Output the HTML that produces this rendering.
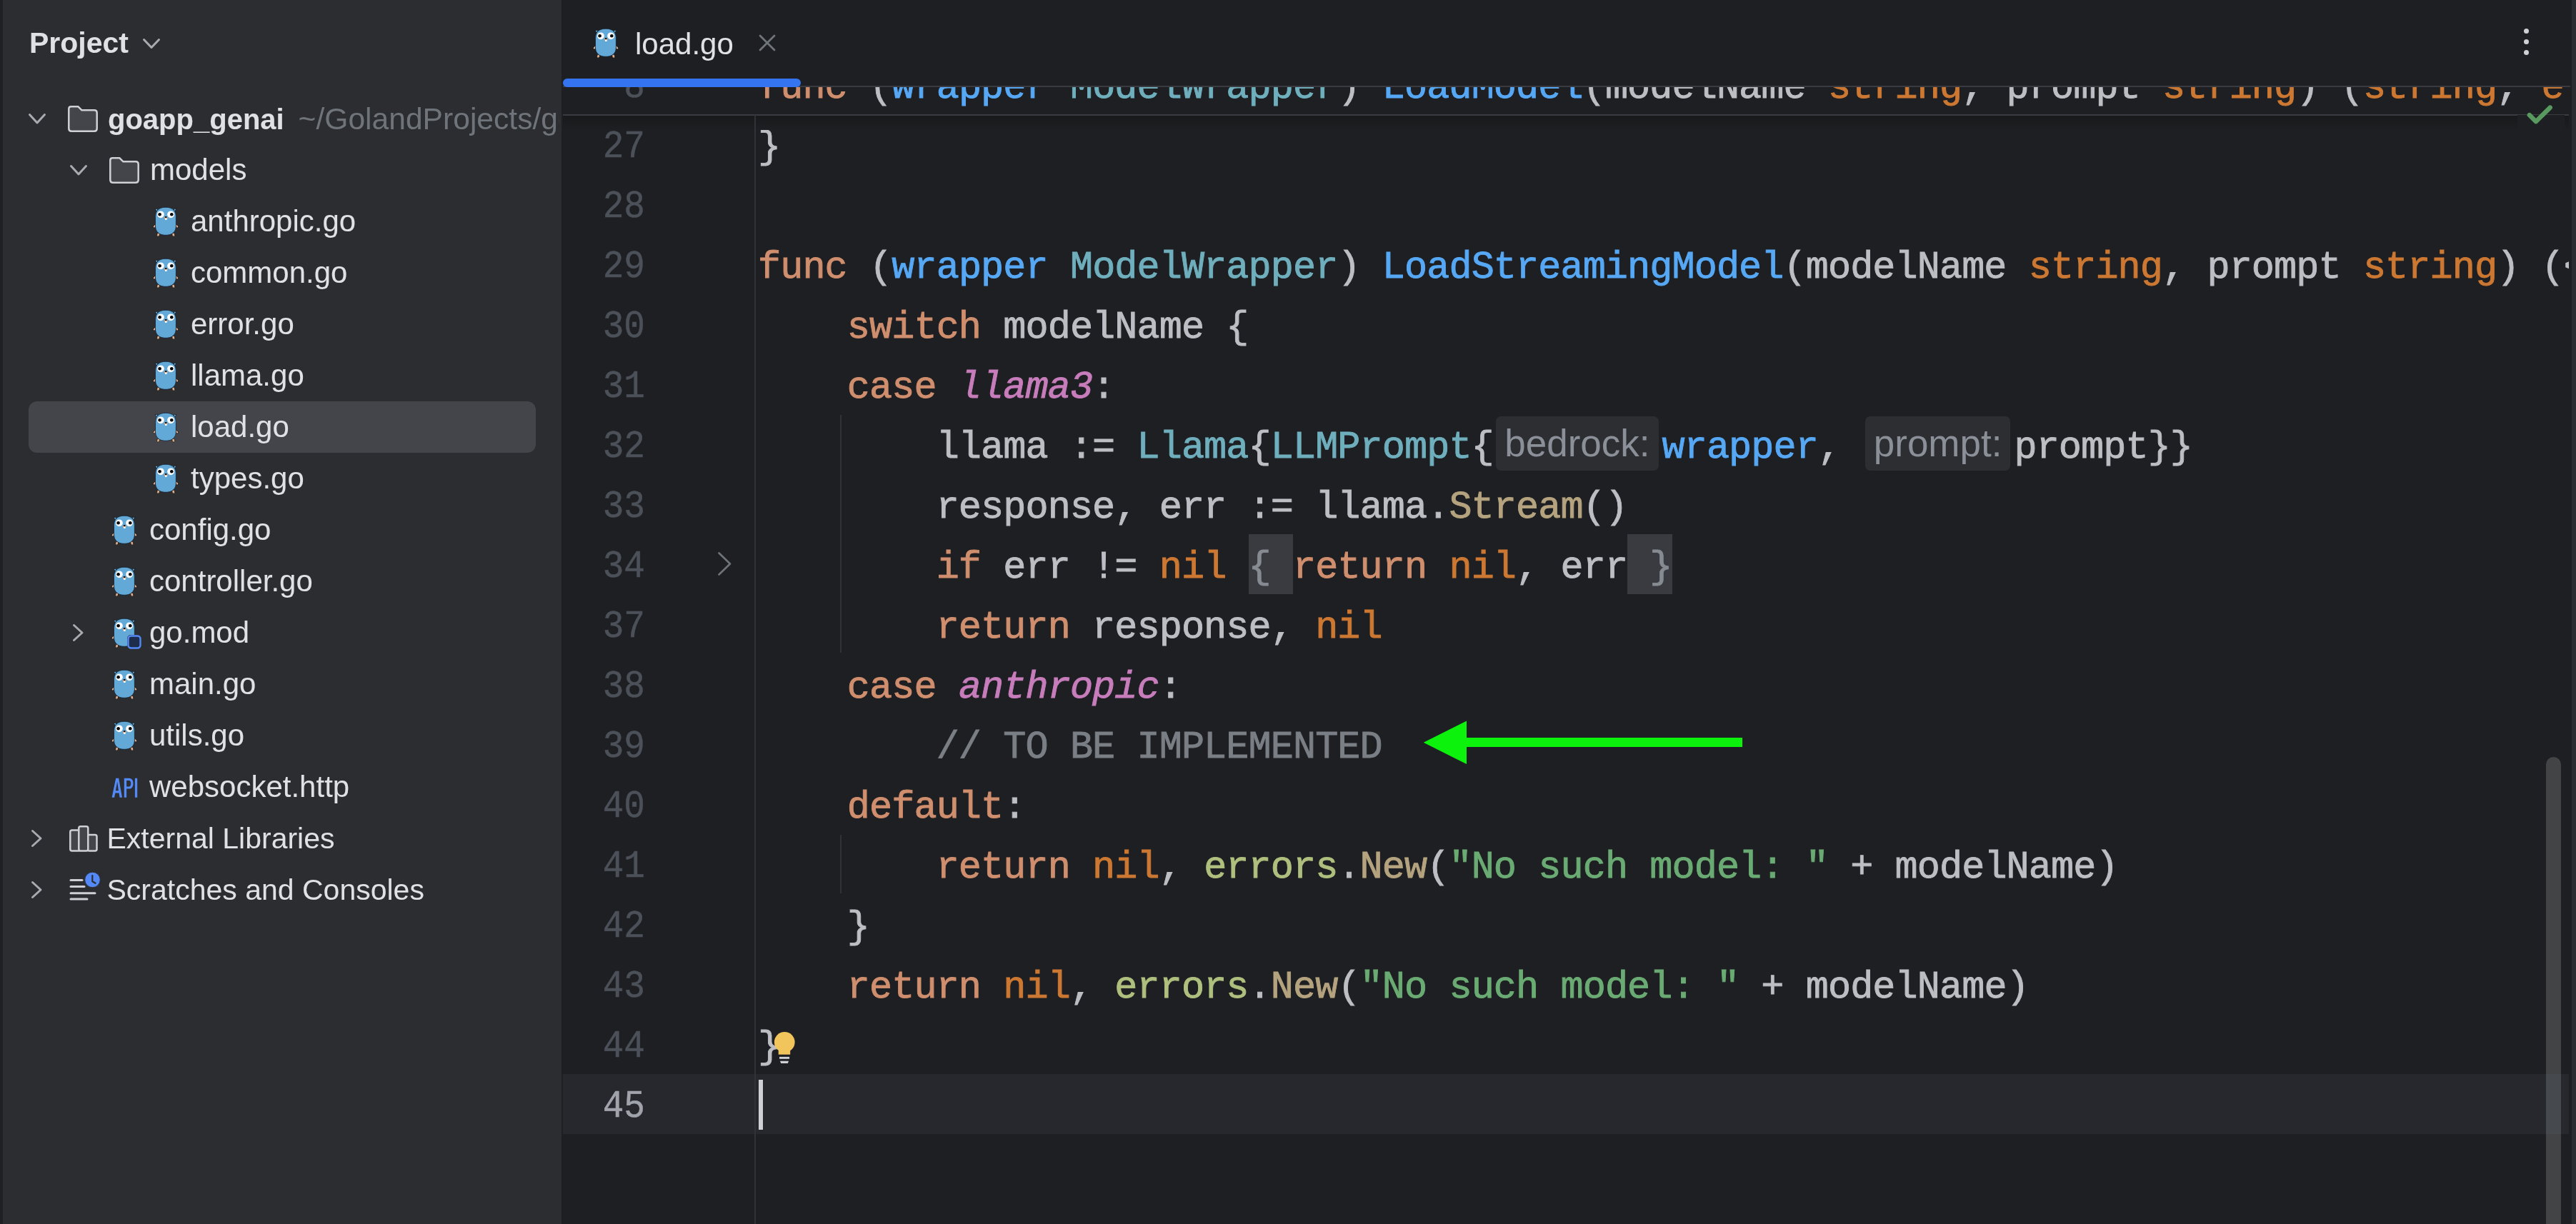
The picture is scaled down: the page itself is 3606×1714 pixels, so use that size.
<!DOCTYPE html>
<html><head><meta charset="utf-8"><style>
*{margin:0;padding:0;box-sizing:border-box}
html,body{width:3606px;height:1714px;overflow:hidden;background:#1E1F22}
body{position:relative;-webkit-font-smoothing:antialiased}
.abs{position:absolute}
#lstrip{position:absolute;left:0;top:0;width:4px;height:1714px;background:#1F2023;z-index:9}
#side{position:absolute;left:0;top:0;width:786px;height:1714px;background:#2B2D30;overflow:hidden;will-change:transform}
#side > *{position:absolute}
#rstrip{position:absolute;left:3600px;top:0;width:6px;height:1714px;background:#2B2D30}
.ic,.gopher{position:absolute;overflow:visible}
.proj{left:41px;top:23.5px;font:bold 41px/72px "Liberation Sans",sans-serif;color:#DFE1E5;white-space:nowrap}
.ft{font:42px/72px "Liberation Sans",sans-serif;color:#DFE1E5;white-space:nowrap;height:72px}
.ft.b{font-weight:bold;font-size:40px;width:632px;overflow:hidden}
.ft.s41{font-size:41px}
.path{font-weight:normal;font-size:42.6px;color:#6F737A;margin-left:8px}
.sel{left:40px;width:710px;height:72px;border-radius:12px;background:#43454A}
.api{font:bold 34px/40px "Liberation Sans",sans-serif;color:#548AF7;transform:scaleX(0.72);transform-origin:0 0;letter-spacing:-1px}
#editor{position:absolute;left:786px;top:0;width:2814px;height:1714px;background:#1E1F22;overflow:hidden}
#tabs{position:absolute;left:0;top:0;width:2814px;height:121px;background:#1E1F22;z-index:5;will-change:transform}
#tabs .bl{position:absolute;left:2px;top:120px;width:2810px;height:2px;background:#393B40}
#tabs .ul{position:absolute;left:2px;top:110px;width:333px;height:12px;border-radius:6px;background:#3574F0}
.tabtxt{position:absolute;left:103px;top:26px;font:42px/72px "Liberation Sans",sans-serif;color:#DFE1E5;white-space:nowrap}
.dots{position:absolute;left:2746.5px;top:39.5px;width:7px;height:44px}
.dots i{position:absolute;left:0;width:7px;height:7px;border-radius:3.5px;background:#CED0D6}
#code{position:absolute;left:-786px;top:0;width:3606px;height:1714px}
.ln{position:absolute;left:786px;width:117px;text-align:right;font:54px/84px "Liberation Mono",monospace;color:#4B5059;white-space:pre;transform:scaleX(0.915) translateY(-0.6px);transform-origin:100% 0;-webkit-text-stroke:0.5px currentColor}
.ln.cur{color:#A1A3AB}
.code{position:absolute;left:1061px;font:53.5px/84px "Liberation Mono",monospace;letter-spacing:-0.9px;color:#BCBEC4;white-space:pre;-webkit-text-stroke:0.9px currentColor}
.kw{color:#CF8E6D}.bt{color:#CC7832}.fn{color:#56A8F5}.rv{color:#56A8F5}.ty{color:#6FAFBD}.co{color:#C77DBB;font-style:italic}
.df{color:#BCBEC4}.mc{color:#B4A37E}.pk{color:#AFBF7E}.st{color:#6AAB73}.cm{color:#7A7E85}
.hint{display:inline-block;vertical-align:top;margin:-2px 5px 0 3.4px;height:76px;padding:0 12px;border-radius:7px;background:#2D2E32;color:#8A8F98;font:53px/76px "Liberation Sans",sans-serif;letter-spacing:0;-webkit-text-stroke:0}
.fold{background:#393B40;color:#868A91;display:inline-block;vertical-align:top;margin-top:-5.1px;padding-top:5.1px;height:84px;line-height:84px}
#sticky{position:absolute;left:786px;top:121px;width:2810px;height:40px;overflow:hidden;background:#1E1F22;z-index:3}
#sticky .inner{position:absolute;left:-786px;top:-121px;width:3606px;height:200px}
#stickyline{position:absolute;left:788px;top:160px;width:2810px;height:2px;background:#393B40;z-index:4}
#shadow{position:absolute;left:788px;top:162px;width:2810px;height:20px;background:linear-gradient(#19191c,#1E1F22);z-index:2}
#curline{position:absolute;left:788px;top:1504px;width:2808px;height:84px;background:#26282E}
#gutline{position:absolute;left:1056px;top:161px;width:2px;height:1554px;background:#2F3237;z-index:5}
.guide{position:absolute;width:2px;background:#2F3237}
#caret{position:absolute;left:1062px;top:1512px;width:6px;height:70px;background:#CED0D6}
#scroll{position:absolute;left:3564px;top:1060px;width:21px;height:700px;border-radius:10.5px;background:rgba(110,112,116,0.45)}
#clip{position:absolute;left:0;top:0;width:3596px;height:1714px;overflow:hidden;will-change:transform}
</style></head>
<body>
<div id="lstrip"></div>
<div id="side"><div class="proj">Project</div>
<svg class="ic" width="24" height="14" viewBox="0 0 24 14" style="left:200.0px;top:53.5px"><path d="M1.5 1.5 L12.0 12.5 L22.5 1.5" fill="none" stroke="#A8ABB0" stroke-width="3" stroke-linecap="round" stroke-linejoin="round"/></svg>
<svg class="ic" width="24" height="14" viewBox="0 0 24 14" style="left:40.0px;top:159.0px"><path d="M1.5 1.5 L12.0 13.0 L22.5 1.5" fill="none" stroke="#A8ABB0" stroke-width="3" stroke-linecap="round" stroke-linejoin="round"/></svg>
<svg class="ic" viewBox="0 0 42 37" width="42" height="37" style="left:95px;top:148px"><path d="M4.5 1.3 H14.5 L19.5 6.3 H37 Q40.7 6.3 40.7 10 V32 Q40.7 35.7 37 35.7 H5 Q1.3 35.7 1.3 32 V4.5 Q1.3 1.3 4.5 1.3 Z" fill="#43454A" stroke="#CED0D6" stroke-width="2.5" stroke-linejoin="round"/></svg>
<div class="ft b" style="left:151px;top:130px">goapp_genai<span class="path">&nbsp;~/GolandProjects/goapp_genai</span></div>
<svg class="ic" width="24" height="14" viewBox="0 0 24 14" style="left:98.0px;top:231.0px"><path d="M1.5 1.5 L12.0 13.0 L22.5 1.5" fill="none" stroke="#A8ABB0" stroke-width="3" stroke-linecap="round" stroke-linejoin="round"/></svg>
<svg class="ic" viewBox="0 0 42 37" width="42" height="37" style="left:153px;top:220px"><path d="M4.5 1.3 H14.5 L19.5 6.3 H37 Q40.7 6.3 40.7 10 V32 Q40.7 35.7 37 35.7 H5 Q1.3 35.7 1.3 32 V4.5 Q1.3 1.3 4.5 1.3 Z" fill="#43454A" stroke="#CED0D6" stroke-width="2.5" stroke-linejoin="round"/></svg>
<div class="ft" style="left:210.0px;top:202px">models</div>
<svg class="gopher" viewBox="0 0 34 42" width="34" height="42" style="left:215px;top:289px">
<path d="M0.9 28.4 L4.8 24.6 M33.1 28.4 L29.2 24.6" stroke="#141414" stroke-width="3.6" stroke-linecap="round"/>
<path d="M0.9 28.4 L4.8 24.6 M33.1 28.4 L29.2 24.6" stroke="#E3AE87" stroke-width="2.4" stroke-linecap="round"/>
<ellipse cx="6.6" cy="39.6" rx="1.9" ry="2.6" transform="rotate(20 6.6 39.6)" fill="#E3AE87" stroke="#141414" stroke-width="0.7"/>
<ellipse cx="27.8" cy="39.6" rx="1.9" ry="2.6" transform="rotate(-20 27.8 39.6)" fill="#E3AE87" stroke="#141414" stroke-width="0.7"/>
<path d="M2 3.5 L6 3.2 L4.8 7.6 Z M32 3.5 L28 3.2 L29.2 7.6 Z" fill="#62A9D7" stroke="#141414" stroke-width="0.7" stroke-linejoin="round"/>
<path d="M17 1.2 C27 1.2 31.4 6.5 31.4 14.5 L31.4 27 C31.4 35.5 26.5 40.3 17 40.3 C7.5 40.3 2.5 35.5 2.5 27 L2.5 14.5 C2.5 6.5 7 1.2 17 1.2 Z" fill="#62A9D7" stroke="#142030" stroke-width="0.8"/>
<circle cx="9.9" cy="11.3" r="4.9" fill="#fff"/><circle cx="24.1" cy="11.3" r="4.9" fill="#fff"/>
<circle cx="8.6" cy="11.3" r="2.3" fill="#000"/><circle cx="25.3" cy="11.3" r="2.3" fill="#000"/>
<ellipse cx="17.2" cy="16.2" rx="2.6" ry="1.6" fill="#D9A884"/>
<ellipse cx="17.2" cy="15" rx="1.5" ry="1.1" fill="#000"/>
<rect x="16" y="16.7" width="2.6" height="2.3" fill="#fff"/>
</svg>
<div class="ft" style="left:267.0px;top:274px">anthropic.go</div>
<svg class="gopher" viewBox="0 0 34 42" width="34" height="42" style="left:215px;top:361px">
<path d="M0.9 28.4 L4.8 24.6 M33.1 28.4 L29.2 24.6" stroke="#141414" stroke-width="3.6" stroke-linecap="round"/>
<path d="M0.9 28.4 L4.8 24.6 M33.1 28.4 L29.2 24.6" stroke="#E3AE87" stroke-width="2.4" stroke-linecap="round"/>
<ellipse cx="6.6" cy="39.6" rx="1.9" ry="2.6" transform="rotate(20 6.6 39.6)" fill="#E3AE87" stroke="#141414" stroke-width="0.7"/>
<ellipse cx="27.8" cy="39.6" rx="1.9" ry="2.6" transform="rotate(-20 27.8 39.6)" fill="#E3AE87" stroke="#141414" stroke-width="0.7"/>
<path d="M2 3.5 L6 3.2 L4.8 7.6 Z M32 3.5 L28 3.2 L29.2 7.6 Z" fill="#62A9D7" stroke="#141414" stroke-width="0.7" stroke-linejoin="round"/>
<path d="M17 1.2 C27 1.2 31.4 6.5 31.4 14.5 L31.4 27 C31.4 35.5 26.5 40.3 17 40.3 C7.5 40.3 2.5 35.5 2.5 27 L2.5 14.5 C2.5 6.5 7 1.2 17 1.2 Z" fill="#62A9D7" stroke="#142030" stroke-width="0.8"/>
<circle cx="9.9" cy="11.3" r="4.9" fill="#fff"/><circle cx="24.1" cy="11.3" r="4.9" fill="#fff"/>
<circle cx="8.6" cy="11.3" r="2.3" fill="#000"/><circle cx="25.3" cy="11.3" r="2.3" fill="#000"/>
<ellipse cx="17.2" cy="16.2" rx="2.6" ry="1.6" fill="#D9A884"/>
<ellipse cx="17.2" cy="15" rx="1.5" ry="1.1" fill="#000"/>
<rect x="16" y="16.7" width="2.6" height="2.3" fill="#fff"/>
</svg>
<div class="ft" style="left:267.0px;top:346px">common.go</div>
<svg class="gopher" viewBox="0 0 34 42" width="34" height="42" style="left:215px;top:433px">
<path d="M0.9 28.4 L4.8 24.6 M33.1 28.4 L29.2 24.6" stroke="#141414" stroke-width="3.6" stroke-linecap="round"/>
<path d="M0.9 28.4 L4.8 24.6 M33.1 28.4 L29.2 24.6" stroke="#E3AE87" stroke-width="2.4" stroke-linecap="round"/>
<ellipse cx="6.6" cy="39.6" rx="1.9" ry="2.6" transform="rotate(20 6.6 39.6)" fill="#E3AE87" stroke="#141414" stroke-width="0.7"/>
<ellipse cx="27.8" cy="39.6" rx="1.9" ry="2.6" transform="rotate(-20 27.8 39.6)" fill="#E3AE87" stroke="#141414" stroke-width="0.7"/>
<path d="M2 3.5 L6 3.2 L4.8 7.6 Z M32 3.5 L28 3.2 L29.2 7.6 Z" fill="#62A9D7" stroke="#141414" stroke-width="0.7" stroke-linejoin="round"/>
<path d="M17 1.2 C27 1.2 31.4 6.5 31.4 14.5 L31.4 27 C31.4 35.5 26.5 40.3 17 40.3 C7.5 40.3 2.5 35.5 2.5 27 L2.5 14.5 C2.5 6.5 7 1.2 17 1.2 Z" fill="#62A9D7" stroke="#142030" stroke-width="0.8"/>
<circle cx="9.9" cy="11.3" r="4.9" fill="#fff"/><circle cx="24.1" cy="11.3" r="4.9" fill="#fff"/>
<circle cx="8.6" cy="11.3" r="2.3" fill="#000"/><circle cx="25.3" cy="11.3" r="2.3" fill="#000"/>
<ellipse cx="17.2" cy="16.2" rx="2.6" ry="1.6" fill="#D9A884"/>
<ellipse cx="17.2" cy="15" rx="1.5" ry="1.1" fill="#000"/>
<rect x="16" y="16.7" width="2.6" height="2.3" fill="#fff"/>
</svg>
<div class="ft" style="left:267.0px;top:418px">error.go</div>
<svg class="gopher" viewBox="0 0 34 42" width="34" height="42" style="left:215px;top:505px">
<path d="M0.9 28.4 L4.8 24.6 M33.1 28.4 L29.2 24.6" stroke="#141414" stroke-width="3.6" stroke-linecap="round"/>
<path d="M0.9 28.4 L4.8 24.6 M33.1 28.4 L29.2 24.6" stroke="#E3AE87" stroke-width="2.4" stroke-linecap="round"/>
<ellipse cx="6.6" cy="39.6" rx="1.9" ry="2.6" transform="rotate(20 6.6 39.6)" fill="#E3AE87" stroke="#141414" stroke-width="0.7"/>
<ellipse cx="27.8" cy="39.6" rx="1.9" ry="2.6" transform="rotate(-20 27.8 39.6)" fill="#E3AE87" stroke="#141414" stroke-width="0.7"/>
<path d="M2 3.5 L6 3.2 L4.8 7.6 Z M32 3.5 L28 3.2 L29.2 7.6 Z" fill="#62A9D7" stroke="#141414" stroke-width="0.7" stroke-linejoin="round"/>
<path d="M17 1.2 C27 1.2 31.4 6.5 31.4 14.5 L31.4 27 C31.4 35.5 26.5 40.3 17 40.3 C7.5 40.3 2.5 35.5 2.5 27 L2.5 14.5 C2.5 6.5 7 1.2 17 1.2 Z" fill="#62A9D7" stroke="#142030" stroke-width="0.8"/>
<circle cx="9.9" cy="11.3" r="4.9" fill="#fff"/><circle cx="24.1" cy="11.3" r="4.9" fill="#fff"/>
<circle cx="8.6" cy="11.3" r="2.3" fill="#000"/><circle cx="25.3" cy="11.3" r="2.3" fill="#000"/>
<ellipse cx="17.2" cy="16.2" rx="2.6" ry="1.6" fill="#D9A884"/>
<ellipse cx="17.2" cy="15" rx="1.5" ry="1.1" fill="#000"/>
<rect x="16" y="16.7" width="2.6" height="2.3" fill="#fff"/>
</svg>
<div class="ft" style="left:267.0px;top:490px">llama.go</div>
<div class="sel" style="top:562px"></div>
<svg class="gopher" viewBox="0 0 34 42" width="34" height="42" style="left:215px;top:577px">
<path d="M0.9 28.4 L4.8 24.6 M33.1 28.4 L29.2 24.6" stroke="#141414" stroke-width="3.6" stroke-linecap="round"/>
<path d="M0.9 28.4 L4.8 24.6 M33.1 28.4 L29.2 24.6" stroke="#E3AE87" stroke-width="2.4" stroke-linecap="round"/>
<ellipse cx="6.6" cy="39.6" rx="1.9" ry="2.6" transform="rotate(20 6.6 39.6)" fill="#E3AE87" stroke="#141414" stroke-width="0.7"/>
<ellipse cx="27.8" cy="39.6" rx="1.9" ry="2.6" transform="rotate(-20 27.8 39.6)" fill="#E3AE87" stroke="#141414" stroke-width="0.7"/>
<path d="M2 3.5 L6 3.2 L4.8 7.6 Z M32 3.5 L28 3.2 L29.2 7.6 Z" fill="#62A9D7" stroke="#141414" stroke-width="0.7" stroke-linejoin="round"/>
<path d="M17 1.2 C27 1.2 31.4 6.5 31.4 14.5 L31.4 27 C31.4 35.5 26.5 40.3 17 40.3 C7.5 40.3 2.5 35.5 2.5 27 L2.5 14.5 C2.5 6.5 7 1.2 17 1.2 Z" fill="#62A9D7" stroke="#142030" stroke-width="0.8"/>
<circle cx="9.9" cy="11.3" r="4.9" fill="#fff"/><circle cx="24.1" cy="11.3" r="4.9" fill="#fff"/>
<circle cx="8.6" cy="11.3" r="2.3" fill="#000"/><circle cx="25.3" cy="11.3" r="2.3" fill="#000"/>
<ellipse cx="17.2" cy="16.2" rx="2.6" ry="1.6" fill="#D9A884"/>
<ellipse cx="17.2" cy="15" rx="1.5" ry="1.1" fill="#000"/>
<rect x="16" y="16.7" width="2.6" height="2.3" fill="#fff"/>
</svg>
<div class="ft" style="left:267.0px;top:562px">load.go</div>
<svg class="gopher" viewBox="0 0 34 42" width="34" height="42" style="left:215px;top:649px">
<path d="M0.9 28.4 L4.8 24.6 M33.1 28.4 L29.2 24.6" stroke="#141414" stroke-width="3.6" stroke-linecap="round"/>
<path d="M0.9 28.4 L4.8 24.6 M33.1 28.4 L29.2 24.6" stroke="#E3AE87" stroke-width="2.4" stroke-linecap="round"/>
<ellipse cx="6.6" cy="39.6" rx="1.9" ry="2.6" transform="rotate(20 6.6 39.6)" fill="#E3AE87" stroke="#141414" stroke-width="0.7"/>
<ellipse cx="27.8" cy="39.6" rx="1.9" ry="2.6" transform="rotate(-20 27.8 39.6)" fill="#E3AE87" stroke="#141414" stroke-width="0.7"/>
<path d="M2 3.5 L6 3.2 L4.8 7.6 Z M32 3.5 L28 3.2 L29.2 7.6 Z" fill="#62A9D7" stroke="#141414" stroke-width="0.7" stroke-linejoin="round"/>
<path d="M17 1.2 C27 1.2 31.4 6.5 31.4 14.5 L31.4 27 C31.4 35.5 26.5 40.3 17 40.3 C7.5 40.3 2.5 35.5 2.5 27 L2.5 14.5 C2.5 6.5 7 1.2 17 1.2 Z" fill="#62A9D7" stroke="#142030" stroke-width="0.8"/>
<circle cx="9.9" cy="11.3" r="4.9" fill="#fff"/><circle cx="24.1" cy="11.3" r="4.9" fill="#fff"/>
<circle cx="8.6" cy="11.3" r="2.3" fill="#000"/><circle cx="25.3" cy="11.3" r="2.3" fill="#000"/>
<ellipse cx="17.2" cy="16.2" rx="2.6" ry="1.6" fill="#D9A884"/>
<ellipse cx="17.2" cy="15" rx="1.5" ry="1.1" fill="#000"/>
<rect x="16" y="16.7" width="2.6" height="2.3" fill="#fff"/>
</svg>
<div class="ft" style="left:267.0px;top:634px">types.go</div>
<svg class="gopher" viewBox="0 0 34 42" width="34" height="42" style="left:157px;top:721px">
<path d="M0.9 28.4 L4.8 24.6 M33.1 28.4 L29.2 24.6" stroke="#141414" stroke-width="3.6" stroke-linecap="round"/>
<path d="M0.9 28.4 L4.8 24.6 M33.1 28.4 L29.2 24.6" stroke="#E3AE87" stroke-width="2.4" stroke-linecap="round"/>
<ellipse cx="6.6" cy="39.6" rx="1.9" ry="2.6" transform="rotate(20 6.6 39.6)" fill="#E3AE87" stroke="#141414" stroke-width="0.7"/>
<ellipse cx="27.8" cy="39.6" rx="1.9" ry="2.6" transform="rotate(-20 27.8 39.6)" fill="#E3AE87" stroke="#141414" stroke-width="0.7"/>
<path d="M2 3.5 L6 3.2 L4.8 7.6 Z M32 3.5 L28 3.2 L29.2 7.6 Z" fill="#62A9D7" stroke="#141414" stroke-width="0.7" stroke-linejoin="round"/>
<path d="M17 1.2 C27 1.2 31.4 6.5 31.4 14.5 L31.4 27 C31.4 35.5 26.5 40.3 17 40.3 C7.5 40.3 2.5 35.5 2.5 27 L2.5 14.5 C2.5 6.5 7 1.2 17 1.2 Z" fill="#62A9D7" stroke="#142030" stroke-width="0.8"/>
<circle cx="9.9" cy="11.3" r="4.9" fill="#fff"/><circle cx="24.1" cy="11.3" r="4.9" fill="#fff"/>
<circle cx="8.6" cy="11.3" r="2.3" fill="#000"/><circle cx="25.3" cy="11.3" r="2.3" fill="#000"/>
<ellipse cx="17.2" cy="16.2" rx="2.6" ry="1.6" fill="#D9A884"/>
<ellipse cx="17.2" cy="15" rx="1.5" ry="1.1" fill="#000"/>
<rect x="16" y="16.7" width="2.6" height="2.3" fill="#fff"/>
</svg>
<div class="ft" style="left:209.0px;top:706px">config.go</div>
<svg class="gopher" viewBox="0 0 34 42" width="34" height="42" style="left:157px;top:793px">
<path d="M0.9 28.4 L4.8 24.6 M33.1 28.4 L29.2 24.6" stroke="#141414" stroke-width="3.6" stroke-linecap="round"/>
<path d="M0.9 28.4 L4.8 24.6 M33.1 28.4 L29.2 24.6" stroke="#E3AE87" stroke-width="2.4" stroke-linecap="round"/>
<ellipse cx="6.6" cy="39.6" rx="1.9" ry="2.6" transform="rotate(20 6.6 39.6)" fill="#E3AE87" stroke="#141414" stroke-width="0.7"/>
<ellipse cx="27.8" cy="39.6" rx="1.9" ry="2.6" transform="rotate(-20 27.8 39.6)" fill="#E3AE87" stroke="#141414" stroke-width="0.7"/>
<path d="M2 3.5 L6 3.2 L4.8 7.6 Z M32 3.5 L28 3.2 L29.2 7.6 Z" fill="#62A9D7" stroke="#141414" stroke-width="0.7" stroke-linejoin="round"/>
<path d="M17 1.2 C27 1.2 31.4 6.5 31.4 14.5 L31.4 27 C31.4 35.5 26.5 40.3 17 40.3 C7.5 40.3 2.5 35.5 2.5 27 L2.5 14.5 C2.5 6.5 7 1.2 17 1.2 Z" fill="#62A9D7" stroke="#142030" stroke-width="0.8"/>
<circle cx="9.9" cy="11.3" r="4.9" fill="#fff"/><circle cx="24.1" cy="11.3" r="4.9" fill="#fff"/>
<circle cx="8.6" cy="11.3" r="2.3" fill="#000"/><circle cx="25.3" cy="11.3" r="2.3" fill="#000"/>
<ellipse cx="17.2" cy="16.2" rx="2.6" ry="1.6" fill="#D9A884"/>
<ellipse cx="17.2" cy="15" rx="1.5" ry="1.1" fill="#000"/>
<rect x="16" y="16.7" width="2.6" height="2.3" fill="#fff"/>
</svg>
<div class="ft" style="left:209.0px;top:778px">controller.go</div>
<svg class="gopher" viewBox="0 0 34 42" width="34" height="42" style="left:157px;top:865px">
<path d="M0.9 28.4 L4.8 24.6 M33.1 28.4 L29.2 24.6" stroke="#141414" stroke-width="3.6" stroke-linecap="round"/>
<path d="M0.9 28.4 L4.8 24.6 M33.1 28.4 L29.2 24.6" stroke="#E3AE87" stroke-width="2.4" stroke-linecap="round"/>
<ellipse cx="6.6" cy="39.6" rx="1.9" ry="2.6" transform="rotate(20 6.6 39.6)" fill="#E3AE87" stroke="#141414" stroke-width="0.7"/>
<ellipse cx="27.8" cy="39.6" rx="1.9" ry="2.6" transform="rotate(-20 27.8 39.6)" fill="#E3AE87" stroke="#141414" stroke-width="0.7"/>
<path d="M2 3.5 L6 3.2 L4.8 7.6 Z M32 3.5 L28 3.2 L29.2 7.6 Z" fill="#62A9D7" stroke="#141414" stroke-width="0.7" stroke-linejoin="round"/>
<path d="M17 1.2 C27 1.2 31.4 6.5 31.4 14.5 L31.4 27 C31.4 35.5 26.5 40.3 17 40.3 C7.5 40.3 2.5 35.5 2.5 27 L2.5 14.5 C2.5 6.5 7 1.2 17 1.2 Z" fill="#62A9D7" stroke="#142030" stroke-width="0.8"/>
<circle cx="9.9" cy="11.3" r="4.9" fill="#fff"/><circle cx="24.1" cy="11.3" r="4.9" fill="#fff"/>
<circle cx="8.6" cy="11.3" r="2.3" fill="#000"/><circle cx="25.3" cy="11.3" r="2.3" fill="#000"/>
<ellipse cx="17.2" cy="16.2" rx="2.6" ry="1.6" fill="#D9A884"/>
<ellipse cx="17.2" cy="15" rx="1.5" ry="1.1" fill="#000"/>
<rect x="16" y="16.7" width="2.6" height="2.3" fill="#fff"/>
</svg>
<svg class="ic" width="14" height="24" viewBox="0 0 14 24" style="left:102.0px;top:874.0px"><path d="M1.5 1.5 L13.0 12.0 L1.5 22.5" fill="none" stroke="#A8ABB0" stroke-width="3" stroke-linecap="round" stroke-linejoin="round"/></svg>
<svg class="ic" width="24" height="24" viewBox="0 0 24 24" style="left:176px;top:887px"><rect x="2" y="2" width="20" height="20" rx="5" fill="#2B2D30"/><rect x="3.5" y="3.5" width="17" height="17" rx="4" fill="#1F2D4D" stroke="#548AF7" stroke-width="2.4"/></svg>
<div class="ft" style="left:209.0px;top:850px">go.mod</div>
<svg class="gopher" viewBox="0 0 34 42" width="34" height="42" style="left:157px;top:937px">
<path d="M0.9 28.4 L4.8 24.6 M33.1 28.4 L29.2 24.6" stroke="#141414" stroke-width="3.6" stroke-linecap="round"/>
<path d="M0.9 28.4 L4.8 24.6 M33.1 28.4 L29.2 24.6" stroke="#E3AE87" stroke-width="2.4" stroke-linecap="round"/>
<ellipse cx="6.6" cy="39.6" rx="1.9" ry="2.6" transform="rotate(20 6.6 39.6)" fill="#E3AE87" stroke="#141414" stroke-width="0.7"/>
<ellipse cx="27.8" cy="39.6" rx="1.9" ry="2.6" transform="rotate(-20 27.8 39.6)" fill="#E3AE87" stroke="#141414" stroke-width="0.7"/>
<path d="M2 3.5 L6 3.2 L4.8 7.6 Z M32 3.5 L28 3.2 L29.2 7.6 Z" fill="#62A9D7" stroke="#141414" stroke-width="0.7" stroke-linejoin="round"/>
<path d="M17 1.2 C27 1.2 31.4 6.5 31.4 14.5 L31.4 27 C31.4 35.5 26.5 40.3 17 40.3 C7.5 40.3 2.5 35.5 2.5 27 L2.5 14.5 C2.5 6.5 7 1.2 17 1.2 Z" fill="#62A9D7" stroke="#142030" stroke-width="0.8"/>
<circle cx="9.9" cy="11.3" r="4.9" fill="#fff"/><circle cx="24.1" cy="11.3" r="4.9" fill="#fff"/>
<circle cx="8.6" cy="11.3" r="2.3" fill="#000"/><circle cx="25.3" cy="11.3" r="2.3" fill="#000"/>
<ellipse cx="17.2" cy="16.2" rx="2.6" ry="1.6" fill="#D9A884"/>
<ellipse cx="17.2" cy="15" rx="1.5" ry="1.1" fill="#000"/>
<rect x="16" y="16.7" width="2.6" height="2.3" fill="#fff"/>
</svg>
<div class="ft" style="left:209.0px;top:922px">main.go</div>
<svg class="gopher" viewBox="0 0 34 42" width="34" height="42" style="left:157px;top:1009px">
<path d="M0.9 28.4 L4.8 24.6 M33.1 28.4 L29.2 24.6" stroke="#141414" stroke-width="3.6" stroke-linecap="round"/>
<path d="M0.9 28.4 L4.8 24.6 M33.1 28.4 L29.2 24.6" stroke="#E3AE87" stroke-width="2.4" stroke-linecap="round"/>
<ellipse cx="6.6" cy="39.6" rx="1.9" ry="2.6" transform="rotate(20 6.6 39.6)" fill="#E3AE87" stroke="#141414" stroke-width="0.7"/>
<ellipse cx="27.8" cy="39.6" rx="1.9" ry="2.6" transform="rotate(-20 27.8 39.6)" fill="#E3AE87" stroke="#141414" stroke-width="0.7"/>
<path d="M2 3.5 L6 3.2 L4.8 7.6 Z M32 3.5 L28 3.2 L29.2 7.6 Z" fill="#62A9D7" stroke="#141414" stroke-width="0.7" stroke-linejoin="round"/>
<path d="M17 1.2 C27 1.2 31.4 6.5 31.4 14.5 L31.4 27 C31.4 35.5 26.5 40.3 17 40.3 C7.5 40.3 2.5 35.5 2.5 27 L2.5 14.5 C2.5 6.5 7 1.2 17 1.2 Z" fill="#62A9D7" stroke="#142030" stroke-width="0.8"/>
<circle cx="9.9" cy="11.3" r="4.9" fill="#fff"/><circle cx="24.1" cy="11.3" r="4.9" fill="#fff"/>
<circle cx="8.6" cy="11.3" r="2.3" fill="#000"/><circle cx="25.3" cy="11.3" r="2.3" fill="#000"/>
<ellipse cx="17.2" cy="16.2" rx="2.6" ry="1.6" fill="#D9A884"/>
<ellipse cx="17.2" cy="15" rx="1.5" ry="1.1" fill="#000"/>
<rect x="16" y="16.7" width="2.6" height="2.3" fill="#fff"/>
</svg>
<div class="ft" style="left:209.0px;top:994px">utils.go</div>
<svg class="ic" width="40" height="30" viewBox="0 0 40 30" style="left:156px;top:1089px"><path fill="#548AF7" fill-rule="evenodd" d="M0.6 27.8 L6.2 0.8 H10.2 L15 27.8 H11.6 L10.5 21.5 H5.3 L4.1 27.8 Z M5.9 18.3 L8.2 5.5 L9.9 18.3 Z M17.8 27.8 V0.8 H24.6 C28.4 0.8 30.5 3.6 30.5 8.2 C30.5 12.8 28.4 15.6 24.6 15.6 H21.1 V27.8 Z M21.1 4 V12.4 H24.4 C26.3 12.4 27.2 11 27.2 8.2 C27.2 5.4 26.3 4 24.4 4 Z M32.9 0.8 H36.2 V27.8 H32.9 Z"/></svg>
<div class="ft" style="left:209.0px;top:1066px">websocket.http</div>
<svg class="ic" width="14" height="24" viewBox="0 0 14 24" style="left:44.0px;top:1162.0px"><path d="M1.5 1.5 L13.0 12.0 L1.5 22.5" fill="none" stroke="#A8ABB0" stroke-width="3" stroke-linecap="round" stroke-linejoin="round"/></svg>
<svg class="ic" viewBox="0 0 40 37" width="40" height="37" style="left:97px;top:1156px">
<rect x="1.3" y="6.5" width="14" height="29" rx="2.5" fill="#43454A" stroke="#CED0D6" stroke-width="2.5"/>
<rect x="25.5" y="13" width="13" height="22.5" rx="2.5" fill="#43454A" stroke="#CED0D6" stroke-width="2.5"/>
<rect x="13.3" y="1.3" width="13" height="34.2" rx="2.5" fill="#43454A" stroke="#CED0D6" stroke-width="2.5"/>
</svg>
<div class="ft s41" style="left:149.5px;top:1138px">External Libraries</div>
<svg class="ic" width="14" height="24" viewBox="0 0 14 24" style="left:44.0px;top:1234.0px"><path d="M1.5 1.5 L13.0 12.0 L1.5 22.5" fill="none" stroke="#A8ABB0" stroke-width="3" stroke-linecap="round" stroke-linejoin="round"/></svg>
<svg class="ic" viewBox="0 0 44 40" width="44" height="40" style="left:96px;top:1220px">
<g stroke="#CED0D6" stroke-width="3" stroke-linecap="round">
<line x1="3" y1="12.5" x2="19" y2="12.5"/><line x1="3" y1="21.5" x2="22" y2="21.5"/><line x1="3" y1="30.7" x2="37" y2="30.7"/><line x1="3" y1="39" x2="26" y2="39"/></g>
<circle cx="33.5" cy="12" r="10.8" fill="#548AF7" stroke="#2B2D30" stroke-width="1"/>
<path d="M33.3 6.2 V14.2 L37.6 16.8" fill="none" stroke="#2B2D30" stroke-width="2.2" stroke-linecap="round" stroke-linejoin="round"/>
</svg>
<div class="ft s41" style="left:149.5px;top:1210px">Scratches and Consoles</div></div>
<div id="clip">
<div id="curline"></div>
<div class="guide" style="left:1176px;top:581px;height:333px"></div>
<div class="guide" style="left:1176px;top:1169px;height:82px"></div>
<div id="gutline"></div>
<div class="ln" style="top:165.1px">27</div>
<div class="code" style="top:165.1px"><span class="df">}</span></div>
<div class="ln" style="top:249.1px">28</div>
<div class="ln" style="top:333.1px">29</div>
<div class="code" style="top:333.1px"><span class="kw">func</span><span class="df"> </span><span class="df">(</span><span class="rv">wrapper</span><span class="df"> </span><span class="ty">ModelWrapper</span><span class="df">) </span><span class="fn">LoadStreamingModel</span><span class="df">(modelName </span><span class="bt">string</span><span class="df">, prompt </span><span class="bt">string</span><span class="df">) (&lt;-chan </span><span class="bt">string</span><span class="df">, </span><span class="bt">error</span><span class="df">) {</span></div>
<div class="ln" style="top:417.1px">30</div>
<div class="code" style="top:417.1px"><span class="df">    </span><span class="kw">switch</span><span class="df"> modelName {</span></div>
<div class="ln" style="top:501.1px">31</div>
<div class="code" style="top:501.1px"><span class="df">    </span><span class="kw">case</span><span class="df"> </span><span class="co">llama3</span><span class="df">:</span></div>
<div class="ln" style="top:585.1px">32</div>
<div class="code" style="top:585.1px"><span class="df">        llama := </span><span class="ty">Llama</span><span class="df">{</span><span class="ty">LLMPrompt</span><span class="df">{</span><span class="hint">bedrock:</span><span class="rv">wrapper</span><span class="df">, </span><span class="hint">prompt:</span><span class="df">prompt}}</span></div>
<div class="ln" style="top:669.1px">33</div>
<div class="code" style="top:669.1px"><span class="df">        response, err := llama.</span><span class="mc">Stream</span><span class="df">()</span></div>
<div class="ln" style="top:753.1px">34</div>
<div class="code" style="top:753.1px"><span class="df">        </span><span class="kw">if</span><span class="df"> err != </span><span class="bt">nil</span><span class="df"> </span><span class="fold">{&nbsp;</span><span class="kw">return</span><span class="df"> </span><span class="bt">nil</span><span class="df">, err</span><span class="fold">&nbsp;}</span></div>
<div class="ln" style="top:837.1px">37</div>
<div class="code" style="top:837.1px"><span class="df">        </span><span class="kw">return</span><span class="df"> response, </span><span class="bt">nil</span></div>
<div class="ln" style="top:921.1px">38</div>
<div class="code" style="top:921.1px"><span class="df">    </span><span class="kw">case</span><span class="df"> </span><span class="co">anthropic</span><span class="df">:</span></div>
<div class="ln" style="top:1005.1px">39</div>
<div class="code" style="top:1005.1px"><span class="df">        </span><span class="cm">// TO BE IMPLEMENTED</span></div>
<div class="ln" style="top:1089.1px">40</div>
<div class="code" style="top:1089.1px"><span class="df">    </span><span class="kw">default</span><span class="df">:</span></div>
<div class="ln" style="top:1173.1px">41</div>
<div class="code" style="top:1173.1px"><span class="df">        </span><span class="kw">return</span><span class="df"> </span><span class="bt">nil</span><span class="df">, </span><span class="pk">errors</span><span class="df">.</span><span class="mc">New</span><span class="df">(</span><span class="st">&quot;No such model: &quot;</span><span class="df"> + modelName)</span></div>
<div class="ln" style="top:1257.1px">42</div>
<div class="code" style="top:1257.1px"><span class="df">    }</span></div>
<div class="ln" style="top:1341.1px">43</div>
<div class="code" style="top:1341.1px"><span class="df">    </span><span class="kw">return</span><span class="df"> </span><span class="bt">nil</span><span class="df">, </span><span class="pk">errors</span><span class="df">.</span><span class="mc">New</span><span class="df">(</span><span class="st">&quot;No such model: &quot;</span><span class="df"> + modelName)</span></div>
<div class="ln" style="top:1425.1px">44</div>
<div class="code" style="top:1425.1px"><span class="df">}</span></div>
<div class="ln cur" style="top:1509.1px">45</div>
<div id="caret"></div>
<svg class="abs" style="left:1005px;top:773px" width="20" height="34" viewBox="0 0 20 34"><path d="M1.5 1.5 L17 16.5 L1.5 31.5" fill="none" stroke="#6F737A" stroke-width="2.6" stroke-linecap="round" stroke-linejoin="round"/></svg>
<svg class="abs" style="left:1080px;top:1444px" width="36" height="48" viewBox="0 0 36 48"><circle cx="18.25" cy="15.45" r="14.35" fill="#F2C55C"/><path d="M9.7 22 H26.2 V32.7 H9.7 Z" fill="#F2C55C"/><rect x="11" y="35.9" width="14.1" height="2.9" fill="#CED0D6"/><path d="M11.9 41.8 H24.1 L22.8 45 H13.2 Z" fill="#CED0D6"/></svg>
<svg class="abs" style="left:1990px;top:1005px" width="455" height="70" viewBox="0 0 455 70"><path d="M2.7 34.8 L63 4.6 L63 28 L449 28 L449 41 L63 41 L63 65 Z" fill="#0CF20C"/></svg>
<div id="sticky"><div class="inner"><div class="ln" style="top:81.1px">8</div><div class="code" style="top:81.1px"><span class="kw">func</span><span class="df"> </span><span class="df">(</span><span class="rv">wrapper</span><span class="df"> </span><span class="ty">ModelWrapper</span><span class="df">) </span><span class="fn">LoadModel</span><span class="df">(modelName </span><span class="bt">string</span><span class="df">, prompt </span><span class="bt">string</span><span class="df">) (</span><span class="bt">string</span><span class="df">, </span><span class="bt">error</span><span class="df">) {</span></div></div></div>
<div id="shadow"></div>
<div id="stickyline"></div>
<div id="scroll"></div>
<svg class="abs" style="left:3524px;top:140px;z-index:6" width="66" height="42" viewBox="0 0 66 42"><rect x="0" y="21" width="66" height="21" fill="#1E1F22"/><path d="M16.8 21.1 L25.9 30.2 L45.75 10.6" fill="none" stroke="#58995F" stroke-width="6.4" stroke-linecap="round" stroke-linejoin="round"/></svg>
</div>
<div id="tabs" style="left:786px">
<svg class="abs" style="left:45px;top:39px;overflow:visible" width="34" height="42" viewBox="0 0 34 42">
<path d="M0.9 28.4 L4.8 24.6 M33.1 28.4 L29.2 24.6" stroke="#141414" stroke-width="3.6" stroke-linecap="round"/>
<path d="M0.9 28.4 L4.8 24.6 M33.1 28.4 L29.2 24.6" stroke="#E3AE87" stroke-width="2.4" stroke-linecap="round"/>
<ellipse cx="6.6" cy="39.6" rx="1.9" ry="2.6" transform="rotate(20 6.6 39.6)" fill="#E3AE87" stroke="#141414" stroke-width="0.7"/>
<ellipse cx="27.8" cy="39.6" rx="1.9" ry="2.6" transform="rotate(-20 27.8 39.6)" fill="#E3AE87" stroke="#141414" stroke-width="0.7"/>
<path d="M2 3.5 L6 3.2 L4.8 7.6 Z M32 3.5 L28 3.2 L29.2 7.6 Z" fill="#62A9D7" stroke="#141414" stroke-width="0.7" stroke-linejoin="round"/>
<path d="M17 1.2 C27 1.2 31.4 6.5 31.4 14.5 L31.4 27 C31.4 35.5 26.5 40.3 17 40.3 C7.5 40.3 2.5 35.5 2.5 27 L2.5 14.5 C2.5 6.5 7 1.2 17 1.2 Z" fill="#62A9D7" stroke="#142030" stroke-width="0.8"/>
<circle cx="9.9" cy="11.3" r="4.9" fill="#fff"/><circle cx="24.1" cy="11.3" r="4.9" fill="#fff"/>
<circle cx="8.6" cy="11.3" r="2.3" fill="#000"/><circle cx="25.3" cy="11.3" r="2.3" fill="#000"/>
<ellipse cx="17.2" cy="16.2" rx="2.6" ry="1.6" fill="#D9A884"/>
<ellipse cx="17.2" cy="15" rx="1.5" ry="1.1" fill="#000"/>
<rect x="16" y="16.7" width="2.6" height="2.3" fill="#fff"/>
</svg>
<div class="tabtxt">load.go</div>
<svg class="abs" style="left:276px;top:48px" width="24" height="24" viewBox="0 0 24 24"><path d="M2 2 L22 22 M22 2 L2 22" stroke="#70747B" stroke-width="2.8" stroke-linecap="round"/></svg>
<div class="dots"><i style="top:0"></i><i style="top:15px"></i><i style="top:30px"></i></div>
<div class="bl"></div>
<div class="ul"></div>
</div>
<div id="rstrip"></div>
</body></html>
